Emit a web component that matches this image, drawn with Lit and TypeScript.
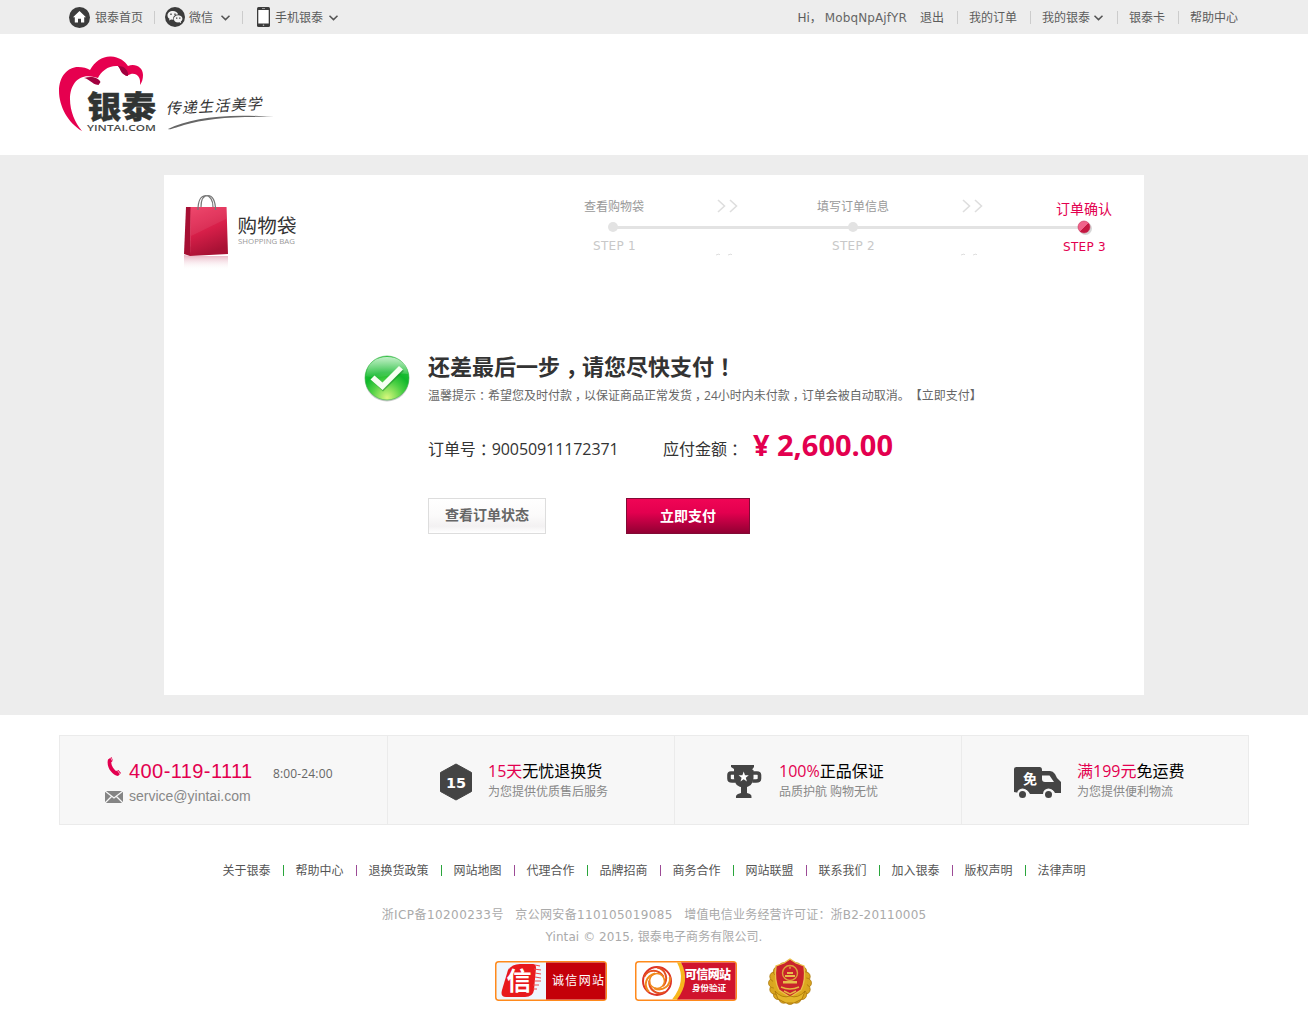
import { LitElement, html, css, svg } from "lit";
import { customElement } from "lit/decorators.js";

/* Full-width punctuation that sits in the middle of its cell. */
const centred = (s: string) =>
  s.split(/([，：！])/).map((p) => (/^[，：！]$/.test(p) ? html`<span class="mid">${p}</span>` : p));

const chevron = html`<svg class="chev" width="11" height="8" viewBox="0 0 11 8"><path d="M1.5 1.8 5.5 5.6 9.5 1.8" fill="none" stroke="#555" stroke-width="1.5"/></svg>`;
const bar = html`<i class="bar"></i>`;

const arrows = html`<svg width="22" height="14" viewBox="0 0 22 14"><path d="M1 1 7.500 7 1 13M13 1 19.500 7 13 13" fill="none" stroke="#dedede" stroke-width="1.600"/></svg>`;

const LINKS = ["关于银泰", "帮助中心", "退换货政策", "网站地图", "代理合作", "品牌招商", "商务合作", "网站联盟", "联系我们", "加入银泰", "版权声明", "法律声明"];

@customElement("app-root")
export class AppRoot extends LitElement {
  static styles = css`
    :host { display: block; width: 1308px; height: 1025px; overflow: hidden; background: #fff; color: #666; font: 12px/18px "Open Sans", "Noto Sans CJK SC", sans-serif; text-spacing-trim: space-all; }
    * { box-sizing: border-box; }
    svg { display: block; flex: none; }
    .mid { font-feature-settings: "halt"; padding: 0 .25em; }
    .top { height: 34px; background: #ededed; display: flex; justify-content: center; }
    .topin { width: 1190px; display: flex; align-items: center; white-space: nowrap; padding: 0 11px 0 10px; font-family: "DejaVu Sans", "Noto Sans CJK SC", sans-serif; line-height: 32px; color: #5c5c5c; }
    .topin span { padding-top: 2px; }
    .grow { flex: 1; }
    .bar { width: 1px; height: 13px; background: #ccc; flex: none; margin: 0 10px 0 11px; }
    .ic { margin-right: 5px; }
    .ic.wx { margin-right: 4px; }
    .ic.ph { margin: 0 5px 0 4px; }
    .chev { margin: 2px 0 0 7px; }
    .ph + span + .chev { margin-left: 5px; }
    .right .chev { margin-left: 3px; margin-right: 1px; }
    .right { display: flex; align-items: center; }
    .right .bar { margin: 0 11px 0 12px; }
    .right .w { margin-right: 1px; }
    .name { margin: 0 13px 0 3px; letter-spacing: .1px; color: #666; }
    .brand { height: 121px; padding: 20px 0 0 57px; }
    .main { background: #ededed; height: 560px; padding: 20px 0; display: flex; justify-content: center; }
    .card { background: #fff; width: 980px; height: 520px; display: flex; flex-direction: column; }
    .head { display: flex; height: 110px; padding: 18px 0 0 18px; }
    .steps { margin-left: 280px; width: 560px; padding-top: 4px; }
    .names { display: flex; height: 20px; line-height: 20px; color: #999; padding-left: 2px; align-items: center; }
    .names .a1 { margin: -2px 0 0 73px; }
    .names .n2 { margin-left: 78px; }
    .names .a2 { margin: -2px 0 0 73px; }
    .names .n3 { margin: 3px 0 0 72px; font-size: 14px; color: #e3004f; }
    .nums { display: flex; height: 17px; line-height: 18px; color: #c8c8c8; font-family: "DejaVu Sans", sans-serif; padding-left: 11px; letter-spacing: .3px; }
    .nums span { width: 239px; }
    .nums span + span { width: 231px; }
    .nums .on { color: #e3004f; width: auto; padding-top: 1px; }
    .crumbs { margin-top: -1px; }
    .result { display: flex; padding: 67px 0 0 199px; }
    .ok { margin-top: 2px; }
    .info { margin: -2px 0 0 16px; width: 600px; }
    h1 { margin: 0; font: bold 22px/32px "Open Sans", "Noto Sans CJK SC", sans-serif; color: #333; white-space: nowrap; }
    .tip { line-height: 20px; color: #666; white-space: nowrap; margin-top: 4px; }
    .sum { display: flex; font-size: 16px; line-height: 40px; color: #333; margin-top: 20px; height: 46px; white-space: nowrap; }
    .order { width: 235px; padding-top: 3px; letter-spacing: -.08px; }
    .due { width: 90px; padding-top: 3px; }
    .price { font-weight: bold; font-size: 29px; line-height: 37px; color: #e3004f; display: flex; }
    .yen { width: 24px; }
    .acts { display: flex; margin-top: 26px; }
    .btn { height: 36px; font: bold 14px/30px "Noto Sans CJK SC", sans-serif; text-align: center; }
    .view { width: 118px; border: 1px solid #ddd; color: #666; background: linear-gradient(#fff, #fbfafa 50%, #f3f1f2 80%, #fff); }
    .pay { width: 124px; margin-left: 80px; line-height: 32px; color: #fff; border: 1px solid #820a35; background: linear-gradient(#f00555, #e3004f 40%, #920033); }
    .feat { display: flex; width: 1190px; height: 90px; margin: 20px auto 0; border: 1px solid #ebebeb; background: #f7f7f7; }
    .cell { width: 287px; display: flex; border-left: 1px solid #ebebeb; white-space: nowrap; }
    .cell.c1 { width: 327px; border: 0; display: block; padding: 19px 0 0 44px; font-family: "Liberation Sans", sans-serif; }
    .line { display: flex; align-items: center; height: 30px; padding-top: 2px; }
    .line svg { margin: -8px 4px 0 1px; }
    .line.mail { height: 24px; font-size: 14px; color: #888; margin-top: -1px; padding: 0; }
    .line.mail svg { margin: 2px 5px 0 0; }
    .tel { font-size: 20px; color: #e3004f; width: 144px; letter-spacing: .42px; }
    .tel + span { font-family: "Open Sans", sans-serif; color: #666; letter-spacing: .15px; padding-top: 5px; }
    .words { padding-top: 25px; }
    .big { font-size: 16px; line-height: 20px; color: #000; }
    .big b { font-weight: normal; color: #e3004f; }
    .small { line-height: 20px; color: #888; padding-top: 1px; }
    .c2, .c3, .c4 { padding-left: 51px; }
    .c2 .words, .c4 .words { margin-left: 15px; }
    .c3 .words { margin-left: 16px; }
    .badge { margin-top: 27px; }
    .links { display: flex; justify-content: center; margin-top: 36px; line-height: 20px; height: 20px; align-items: center; color: #555; }
    .links i { width: 1px; height: 11px; margin: -2px 11.5px 0 12.5px; background: #2aa53c; }
    .links i.p { background: #9c4a96; }
    .copy { text-align: center; margin-top: 23px; color: #aaa; font: 12px/22px "DejaVu Sans", "Noto Sans CJK SC", sans-serif; display: flex; justify-content: center; white-space: nowrap; }
    .copy.two { margin-top: 0; letter-spacing: .08px; }
    .copy span + span { margin-left: 11.5px; }
    .l1 { letter-spacing: .42px; }
    .l2 { letter-spacing: .34px; }
    .l3 { letter-spacing: .2px; }
    .certs { display: flex; margin: 13px 0 0 495px; }
    .certs .s2 { margin-left: 28px; }
    .certs .s3 { margin: -5px 0 0 29px; }
    .cjk { font-family: "Noto Sans CJK SC", sans-serif; }
    .lat { font-family: "Open Sans", sans-serif; }
  `;

  private logo() {
    return html`<svg width="220" height="84" viewBox="57 54 220 84">
      <path d="M82 131C68 123 59 106 59 91 59 76 68 67 78 67 83 67 87 68 90 70 95 61 103 56 111 56.500 119 57 125 61 128 66 135 63 143 67 143 75 143 79 142 82 140 85 141 77 137 73 131 74L126 76 118 66C109 65 101 71 98 78L94 77C79 73 70 84 70 99 70 111 75 123 82 131Z" fill="#e6004f"/>
      <path d="M84 78C91 76 98 77 100.500 82L98.500 85C91 84 90 79 84 78ZM118 66C125 66 129 71 128 76 121 75 121 70 118 66Z" fill="#a1003f"/>
      <text class="cjk" x="87" y="118" font-size="31" font-weight="900" fill="#303433" stroke="#303433" stroke-width=".4" textLength="69" lengthAdjust="spacingAndGlyphs">银泰</text>
      <text class="lat" x="87" y="131.300" font-size="9" font-weight="600" fill="#484b4a" textLength="69" lengthAdjust="spacingAndGlyphs">YINTAI.COM</text>
      <g class="cjk" fill="#333" font-size="15" font-style="italic" transform="rotate(-3 166 115)">
        <text x="166" y="114" textLength="96">传递生活美学</text>
      </g>
      <path d="M168 129C190 118 225 113 274 117 235 116 205 119 184 125 174 128 170 130 168 129Z" fill="#666"/>
    </svg>`;
  }

  private bag() {
    return html`<svg width="120" height="84" viewBox="182 193 120 84">
      <defs>
        <linearGradient id="f" x1="0" y1="0" x2=".3" y2="1"><stop offset="0" stop-color="#ee3a62"/><stop offset=".55" stop-color="#d71f49"/><stop offset="1" stop-color="#a91235"/></linearGradient>
        <linearGradient id="r" x1="0" y1="0" x2="0" y2="1"><stop offset="0" stop-color="#d06080" stop-opacity=".5"/><stop offset="1" stop-color="#fff" stop-opacity="0"/></linearGradient>
      </defs>
      <path d="M184 255 190 256H228V270H184Z" fill="url(#r)"/>
      <path d="M186 207 191 207 190 256 184 254Z" fill="#a60f33"/>
      <path d="M190.500 207H226.500L228 254 190 256Z" fill="url(#f)"/>
      <path d="M191 236 226 219V207H191Z" fill="#fff" opacity=".07"/>
      <path d="M198 210C198 201 201 196 205.500 195.500 210 195.500 213 200 213 207M201 207C201 199 204 195.500 208 195.500 212.500 195.500 215.500 201 215.500 210" fill="none" stroke="#777" stroke-width="1.200"/>
      <text class="cjk" x="237.500" y="232.500" font-size="19.500" fill="#333" textLength="59">购物袋</text>
      <text class="lat" x="238" y="243.800" font-size="8" fill="#999" textLength="57" lengthAdjust="spacingAndGlyphs">SHOPPING BAG</text>
    </svg>`;
  }

  private certs() {
    const rays = Array.from({ length: 16 }, (_, i) => i * 22.5);
    return html`<div class="certs">
      <svg width="112" height="40" viewBox="0 0 112 40">
        <rect x=".75" y=".75" width="110.500" height="38.500" rx="3" fill="#eff6fd" stroke="#ff8a1c" stroke-width="1.500"/>
        <path d="M51 1.500H109Q110.500 1.500 110.500 3V37Q110.500 38.500 109 38.500H51Z" fill="#c40009"/>
        <path d="M13 9Q17 3 25 3H38Q41 3 41 7L39 29Q38 36 30 36H11Q5 36 7 29Z" fill="#e8191c"/>
        <path d="M40 4 45 5M39 8 46 9M40 12 46 13M40 16 46 17M39 20 46 20M38 24 44 24M38 28 42 28" stroke="#ee4a4a" stroke-width="1.200"/>
        <text class="cjk" x="11.500" y="29" font-size="25" font-weight="bold" fill="#fff">信</text>
        <text class="cjk" x="57" y="24" font-size="12" fill="#fff" textLength="52">诚信网站</text>
      </svg>
      <svg class="s2" width="102" height="40" viewBox="0 0 102 40">
        <rect x=".75" y=".75" width="100.500" height="38.500" rx="3" fill="#fff" stroke="#ff8a1c" stroke-width="1.500"/>
        <path d="M42 1.500Q52 20 37 38.500H45Q57 20 46 1.500Z" fill="#f7b71d"/>
        <path d="M46 1.500H99Q100.500 1.500 100.500 3V37Q100.500 38.500 99 38.500H42Q56 20 46 1.500Z" fill="#d0142d"/>
        <g fill="none">
          <circle cx="22" cy="20" r="14" stroke="#dd3327" stroke-width="2"/>
          ${[0, 72, 144, 216, 288].map((a, i) => svg`<path d="M22 6.500C31 8 34 18 28 25" stroke=${i % 2 ? "#f08a1c" : "#e5501f"} stroke-width="2" transform="rotate(${a} 22 20)"/>`)}
          <circle cx="22" cy="20" r="7.500" stroke="#f08a1c" stroke-width="1.500"/>
        </g>
        <text class="cjk" x="50" y="18" font-size="12" font-weight="900" fill="#fff" textLength="46">可信网站</text>
        <text class="cjk" x="57" y="30" font-size="8.500" font-weight="bold" fill="#fff" textLength="34">身份验证</text>
      </svg>
      <svg class="s3" width="48" height="50" viewBox="0 0 48 50">
        ${rays.map((a) => svg`<ellipse cx="24" cy="11" rx="5" ry="5.500" fill="#d9a520" stroke="#a87408" stroke-width=".7" transform="rotate(${a} 24 27)"/>`)}
        <circle cx="24" cy="27" r="17" fill="#dda91f"/>
        <path d="M24 3 30 7 38 10Q40 25 35 34L24 41 13 34Q8 25 10 10L18 7Z" fill="#c9232b" stroke="#eac14a" stroke-width="1.300"/>
        <circle cx="24" cy="17" r="7.500" fill="none" stroke="#dca43a" stroke-width="1.400"/>
        <path d="M24 10 25 12.500H23ZM19 19H29V21H19ZM21 16H27V18H21ZM17 25H31V27.500H17Z" fill="#e8bd4b"/>
        <path d="M15 31Q24 35 33 31M18 35 24 38 30 35" fill="none" stroke="#e5b741" stroke-width="1.500"/>
        <path d="M9 35Q16 43 24 40 32 43 39 35L36 43 28 47H20L12 43Z" fill="#e4b52a" stroke="#a87408" stroke-width=".8"/>
      </svg>
    </div>`;
  }

  render() {
    return html`
      <div class="top"><div class="topin">
        <svg class="ic" width="21" height="21" viewBox="0 0 21 21"><circle cx="10.500" cy="10.500" r="10.500" fill="#3c3c3c"/><path d="M10.500 4 17 10.200H15.200V15.500H12V11.800H9V15.500H5.800V10.200H4Z" fill="#fff"/></svg>
        <span>银泰首页</span>${bar}
        <svg class="ic wx" width="20" height="20" viewBox="0 0 20 20"><circle cx="10" cy="10" r="10" fill="#3c3c3c"/><path d="M8 4C4.600 4 2.500 6 2.500 8.400 2.500 10 3.300 11 4.500 11.800L4 13.600 6.200 12.500 8.500 12.800C7.500 9 10 7.500 13.200 7.500 12.500 5.300 10.500 4 8 4Z" fill="#f4f4f4"/><path d="M13.200 8.200C10.500 8.200 8.800 10 8.800 12 8.800 14.200 11 15.800 14.500 15.300L16.200 16.200 15.800 14.600C18.800 12.500 17.500 8.200 13.200 8.200Z" fill="#f4f4f4"/><path d="M6 6.500V8M10 6.500V8M11.700 10.500V11.700M14.800 10.500V11.700" stroke="#3c3c3c" stroke-width="1.300"/></svg>
        <span>微信</span>${chevron}${bar}
        <svg class="ic ph" width="13" height="20" viewBox="0 0 13 20"><rect width="13" height="20" rx="1.500" fill="#3c3c3c"/><rect x="1.300" y="3" width="10.400" height="13.500" fill="#fff"/><path d="M5 1.500H8" stroke="#999"/><circle cx="6.500" cy="18.200" r=".8" fill="#bbb"/></svg>
        <span>手机银泰</span>${chevron}
        <div class="grow"></div>
        <div class="right">
          <span>Hi，</span><span class="name">MobqNpAjfYR</span><span class="w">退出</span>${bar}
          <span class="w">我的订单</span>${bar}<span>我的银泰</span>${chevron}${bar}<span class="w">银泰卡</span>${bar}<span>帮助中心</span>
        </div>
      </div></div>
      <div class="brand">${this.logo()}</div>
      <div class="main"><div class="card">
        <div class="head">
          ${this.bag()}
          <div class="steps">
            <div class="names"><span>查看购物袋</span><span class="a1">${arrows}</span><span class="n2">填写订单信息</span><span class="a2">${arrows}</span><span class="n3">订单确认</span></div>
            <svg width="540" height="20" viewBox="0 0 540 20">
              <defs><linearGradient id="d" x1="0" y1="0" x2="1" y2="1"><stop offset=".5" stop-color="#f0628a"/><stop offset=".52" stop-color="#c41741"/></linearGradient></defs>
              <path d="M31 10.500H502" stroke="#e3e3e3" stroke-width="3"/>
              <circle cx="31" cy="10" r="5" fill="#e3e3e3"/><circle cx="271" cy="10" r="5" fill="#e3e3e3"/>
              <circle cx="503.500" cy="11.500" r="6.500" fill="#bbb" opacity=".6"/><circle cx="502" cy="10" r="6" fill="url(#d)" stroke="#c93059" stroke-width=".6"/>
            </svg>
            <div class="nums"><span>STEP 1</span><span>STEP 2</span><span class="on">STEP 3</span></div>
            <svg class="crumbs" width="540" height="4" viewBox="0 0 540 4"><path d="M134 2 137 1 138 2M146 2 149 1 150 2M379 2 382 1 383 2M391 2 394 1 395 2" fill="none" stroke="#dedede"/></svg>
          </div>
        </div>
        <div class="result">
          <svg class="ok" width="49" height="50" viewBox="0 0 49 50">
            <defs>
              <radialGradient id="g" cx=".5" cy=".95" r=".9"><stop offset="0" stop-color="#d9f77d"/><stop offset=".4" stop-color="#4fd145"/><stop offset=".65" stop-color="#10b82b"/><stop offset="1" stop-color="#2fc843"/></radialGradient>
              <linearGradient id="h" x1="0" y1="0" x2="0" y2="1"><stop offset="0" stop-color="#fff" stop-opacity=".7"/><stop offset="1" stop-color="#fff" stop-opacity=".05"/></linearGradient>
            </defs>
            <ellipse cx="24" cy="26" rx="22" ry="21.500" fill="#999" opacity=".5"/>
            <circle cx="24" cy="24" r="22" fill="url(#g)" stroke="#35b045" stroke-width=".6"/>
            <path d="M3 22C4 9 13 3 24 3S44 9 45 20C31 17 18 27 3 22Z" fill="url(#h)"/>
            <path d="M8 26 12 22 20 29 36 13 41 17 20 37.500Z" fill="#178a2a" opacity=".5"/>
            <path d="M7.500 25.500 11.500 21.500 19.500 28.500 36 12 40 15.500 19.500 36Z" fill="#f6fff2"/>
          </svg>
          <div class="info">
            <h1>${centred("还差最后一步，请您尽快支付！")}</h1>
            <div class="tip">${centred("温馨提示：希望您及时付款，以保证商品正常发货，24小时内未付款，订单会被自动取消。【立即支付】")}</div>
            <div class="sum"><span class="order">${centred("订单号：")}90050911172371</span><span class="due">${centred("应付金额：")}</span><span class="price"><span class="yen">¥</span>2,600.00</span></div>
            <div class="acts"><div class="btn view">查看订单状态</div><div class="btn pay">立即支付</div></div>
          </div>
        </div>
      </div></div>
      <div class="feat">
        <div class="cell c1">
          <div class="line"><svg width="20" height="22" viewBox="0 0 20 22"><path d="M3 3.500 6.500 1 8 4.500 6.200 6.500C6.500 10 8.500 13 11 15L13.500 14 16 17 13 20C7 19 1 11 3 3.500Z" fill="#e3004f"/><path d="M5.500 1.500 7.500 5M12.500 14.500 15 18" stroke="#f7f7f7" stroke-width=".7"/></svg><span class="tel">400-119-1111</span><span>8:00-24:00</span></div>
          <div class="line mail"><svg width="20" height="14" viewBox="0 0 20 14"><rect x="1" y="1" width="18" height="12" fill="#858585"/><path d="M1 1 10 8 19 1M1 13 7.500 6.500M19 13 12.500 6.500" fill="none" stroke="#f7f7f7" stroke-width="1.300"/></svg><span>service@yintai.com</span></div>
        </div>
        <div class="cell c2">
          <svg class="badge" width="34" height="38" viewBox="0 0 34 38"><path d="M17 1 32.500 9.500V28.500L17 37 1.500 28.500V9.500Z" fill="#444" stroke="#444" stroke-linejoin="round"/><text x="17" y="24.500" font-family="DejaVu Sans" font-weight="bold" font-size="14.500" fill="#fff" text-anchor="middle">15</text></svg>
          <div class="words"><div class="big"><b>15天</b>无忧退换货</div><div class="small">为您提供优质售后服务</div></div>
        </div>
        <div class="cell c3">
          <svg class="badge" width="37" height="38" viewBox="0 0 37 38"><path d="M5 2H28V4L26.500 6V9H8V6L5 4Z" fill="#444"/><path d="M8 7H27.500V15Q27 24 17.750 24.500 8.500 24 8 15Z" fill="#444"/><path d="M9 10H5Q3 10 3 12V15.500Q3 18 6 18H9M26.500 10H31Q33.500 10 33.500 12V15.500Q33.500 18 30 18H26.500" fill="none" stroke="#444" stroke-width="3.600"/><path d="M15 23H21V30L24 31Q26 32 25.500 35H10Q9.500 32 12 31L15 30Z" fill="#444"/><path d="M17.700 8.500 19 12.200 22.800 12.300 19.800 14.700 20.900 18.500 17.700 16.300 14.500 18.500 15.600 14.700 12.600 12.300 16.400 12.200Z" fill="#fff"/></svg>
          <div class="words"><div class="big"><b>100%</b>正品保证</div><div class="small">品质护航 购物无忧</div></div>
        </div>
        <div class="cell c4">
          <svg class="badge" width="49" height="38" viewBox="0 0 49 38"><path d="M3.500 4H26.500Q29 4 29 7V8H37Q40 8 42 11L44 15 48 19V30H42Q39 24 34 28L32 31H17Q13 24 7 28L6 30 1 29V6Q1 4 3.500 4Z" fill="#444"/><path d="M29 12.500H36.500L41 19H32Q29 19 29 16Z" fill="#f7f7f7"/><circle cx="9.500" cy="31" r="5.500" fill="#f7f7f7"/><circle cx="35.500" cy="31" r="5.500" fill="#f7f7f7"/><circle cx="9.500" cy="31.500" r="3.500" fill="#444"/><circle cx="35.500" cy="31.500" r="3.500" fill="#444"/><text class="cjk" x="10" y="21" font-size="14" font-weight="bold" fill="#fff">免</text></svg>
          <div class="words"><div class="big"><b>满199元</b>免运费</div><div class="small">为您提供便利物流</div></div>
        </div>
      </div>
      <div class="links">${LINKS.map((l, i) => html`${i ? html`<i class=${i % 2 ? "g" : "p"}></i>` : ""}<span>${l}</span>`)}</div>
      <div class="copy"><span class="l1">浙ICP备10200233号</span><span class="l2">京公网安备110105019085</span><span class="l3">增值电信业务经营许可证：浙B2-20110005</span></div>
      <div class="copy two">Yintai © 2015, 银泰电子商务有限公司.</div>
      ${this.certs()}
    `;
  }
}
